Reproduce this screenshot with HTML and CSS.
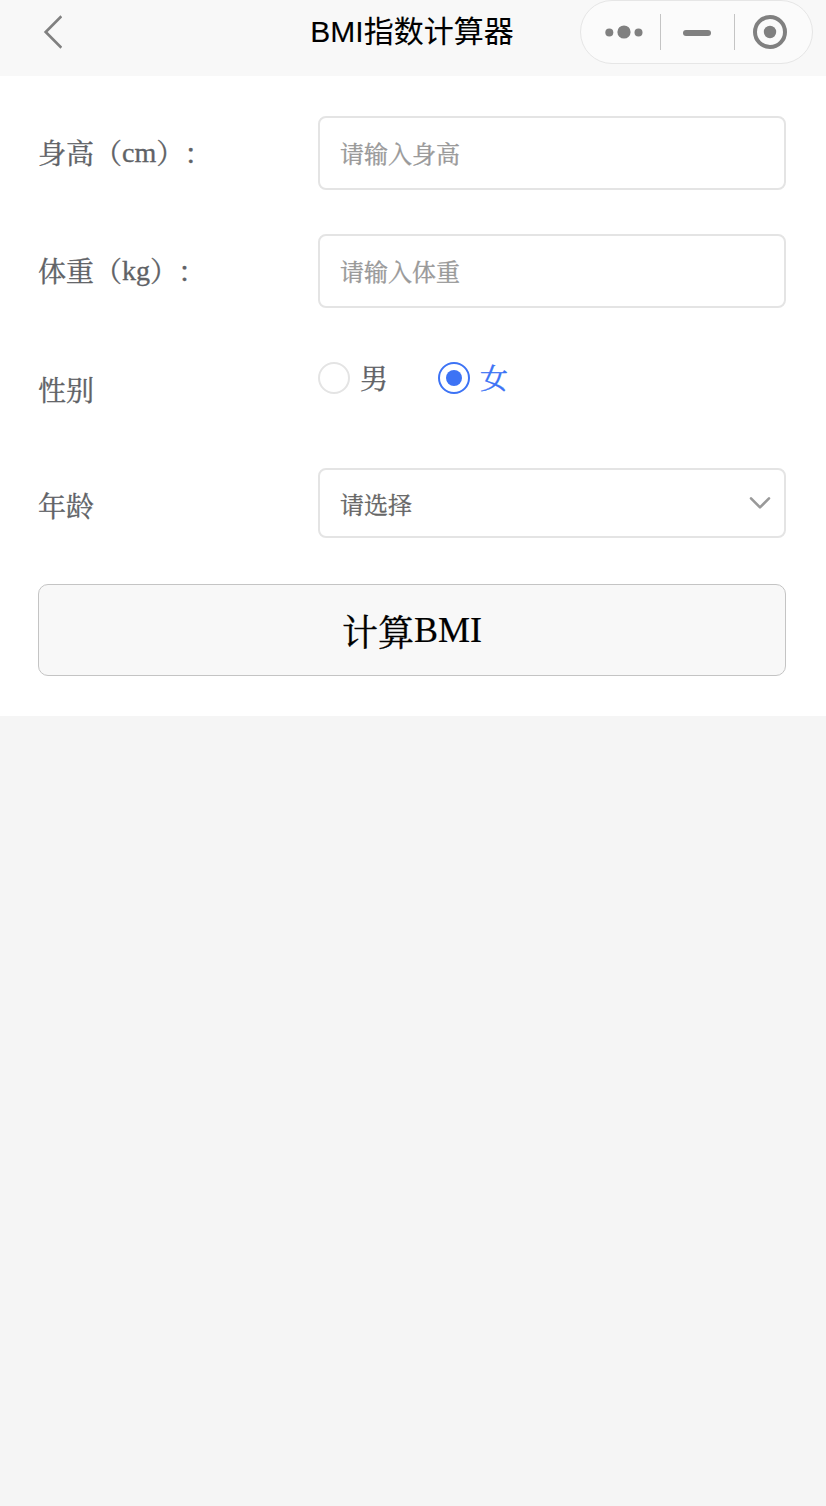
FILE: index.html
```html
<!DOCTYPE html>
<html lang="zh-CN">
<head>
<meta charset="utf-8">
<title>BMI指数计算器</title>
<link rel="stylesheet" href="styles.css">
</head>
<body>
<header class="navbar">
  <svg class="back" width="24" height="40" viewBox="0 0 24 40" fill="none" stroke="#808080" stroke-width="2.7"><path d="M23.4 4.3 7.7 20 23.4 35.7"/></svg>
  <h1 class="title">BMI指数计算器</h1>
  <div class="capsule">
    <svg class="dots" width="38" height="14" viewBox="0 0 38 14" fill="#808080"><circle cx="4.3" cy="7.5" r="4"/><circle cx="19" cy="7" r="6.6"/><circle cx="33.5" cy="7.5" r="4"/></svg>
    <span class="divider"></span>
    <span class="minus"></span>
    <span class="divider"></span>
    <svg class="target" width="34" height="34" viewBox="0 0 34 34"><circle cx="17" cy="17" r="15" fill="none" stroke="#808080" stroke-width="4"/><circle cx="17" cy="17" r="6.2" fill="#808080"/></svg>
  </div>
</header>
<main class="form">
  <div class="row">
    <label class="label mixed" for="height">身高（<span class="unit">cm</span>）：</label>
    <input class="input" id="height" placeholder="请输入身高">
  </div>
  <div class="row">
    <label class="label mixed" for="weight">体重（<span class="unit">kg</span>）：</label>
    <input class="input" id="weight" placeholder="请输入体重">
  </div>
  <div class="row row-sex">
    <span class="label">性别</span>
    <div class="radios">
      <span class="radio"><i class="ring"></i><span class="name">男</span></span>
      <span class="radio checked"><i class="ring"></i><span class="name">女</span></span>
    </div>
  </div>
  <div class="row row-age">
    <span class="label">年龄</span>
    <div class="select">
      <span class="value">请选择</span>
      <svg width="22" height="14" viewBox="0 0 22 14" fill="none" stroke="#999" stroke-width="2.6" stroke-linecap="round" stroke-linejoin="round"><path d="M2 2.3 11 11.3 20 2.3"/></svg>
    </div>
  </div>
  <button class="submit">计算<span class="latin">BMI</span></button>
</main>
</body>
</html>
```
FILE: styles.css
```css
* {
  box-sizing: border-box;
}

body {
  margin: 0;
  min-height: 100vh;
  background: #f5f5f5;
  font-family: "Liberation Serif", "Songti SC", "Noto Serif CJK SC", "Noto Sans CJK SC", serif;
  color: #606266;
  text-spacing-trim: space-all;
  -webkit-text-stroke: 0.35px;
}

.navbar {
  display: grid;
  grid-template-columns: 1fr auto 1fr;
  align-items: start;
  height: 76px;
  padding: 0 13px 0 38px;
  background: #f8f8f8;
}

.back {
  margin-top: 12px;
}

.title {
  margin: 0 0 0 -27px;
  font: 400 30px/64px "Liberation Sans", "Noto Sans CJK SC", sans-serif;
  color: #000;
  -webkit-text-stroke: 0.1px;
}

.capsule {
  justify-self: end;
  display: flex;
  align-items: center;
  width: 233px;
  height: 64px;
  padding: 0 25px 0 24px;
  border: 1px solid #e6e6e6;
  border-radius: 32px;
  background: #fbfbfb;
}

.divider {
  width: 1px;
  height: 36px;
  margin-left: 17px;
  background: #c4c4c4;
}

.minus {
  width: 28px;
  height: 6px;
  margin: 2px 6px 0 22px;
  border-radius: 3px;
  background: #808080;
}

.target {
  margin-left: 18px;
}

.form {
  height: 640px;
  padding: 40px 40px 40px 38px;
  background: #fff;
}

.row {
  display: flex;
  height: 74px;
  margin-bottom: 44px;
}

.label {
  width: 280px;
  font-size: 28px;
  line-height: 79px;
}

.mixed {
  line-height: 77px;
}

.unit {
  line-height: 1;
  vertical-align: 2px;
}

.input,
.select {
  flex: 1;
  min-width: 0;
  height: 74px;
  padding: 0 20px;
  border: 2px solid #e4e4e4;
  border-radius: 8px;
  background: #fff;
  font-family: inherit;
  font-size: 24px;
  color: #606266;
}

.input {
  padding-top: 5px;
  outline: none;
}

.input::placeholder {
  color: #999;
  opacity: 1;
}

.row-sex {
  margin-bottom: 42px;
}

.radios {
  display: flex;
  height: 52px;
  align-items: center;
  gap: 50px;
}

.radio {
  display: flex;
  align-items: center;
  gap: 10px;
  font-size: 28px;
}

.name {
  padding-bottom: 2px;
}

.ring {
  width: 32px;
  height: 32px;
  border: 2px solid #e4e4e4;
  border-radius: 50%;
}

.checked {
  color: #3d73f5;
}

.checked .ring {
  display: grid;
  place-items: center;
  border-color: #3d73f5;
}

.checked .ring::after {
  content: "";
  width: 16px;
  height: 16px;
  border-radius: 50%;
  background: #3d73f5;
}

.row-age {
  margin-bottom: 42px;
}

.select {
  display: flex;
  align-items: center;
  justify-content: space-between;
  height: 70px;
  padding-right: 13px;
  color: #666;
}

.submit {
  display: block;
  width: 100%;
  height: 92px;
  padding: 0;
  border: 1px solid #c4c4c4;
  border-radius: 10px;
  background: #f8f8f8;
  font-family: inherit;
  font-size: 36px;
  color: #000;
  -webkit-text-stroke: 0.4px;
}

.latin {
  line-height: 1;
  vertical-align: 4px;
  -webkit-text-stroke: 0.2px;
}
```
